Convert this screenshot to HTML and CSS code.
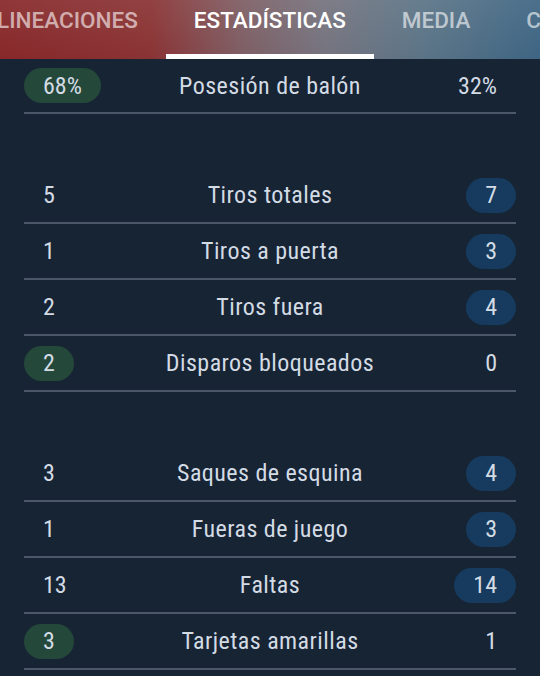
FILE: index.html
```html
<!DOCTYPE html>
<html lang="es">
<head>
<meta charset="utf-8">
<link rel="stylesheet" href="styles.css">
</head>
<body>
<nav class="tabs">
  <div class="tab-strip">
    <div class="tab">LINEACIONES</div>
    <div class="tab active">ESTADÍSTICAS</div>
    <div class="tab">MEDIA</div>
    <div class="tab">CLASIFICACIÓN</div>
  </div>
</nav>
<main class="stats">
  <section class="group">
    <div class="row first"><span class="val left"><span class="pill green">68%</span></span><span class="label">Posesión de balón</span><span class="val right">32%</span></div>
  </section>
  <section class="group">
    <div class="row"><span class="val left">5</span><span class="label">Tiros totales</span><span class="val right"><span class="pill blue">7</span></span></div>
    <div class="row"><span class="val left">1</span><span class="label">Tiros a puerta</span><span class="val right"><span class="pill blue">3</span></span></div>
    <div class="row"><span class="val left">2</span><span class="label">Tiros fuera</span><span class="val right"><span class="pill blue">4</span></span></div>
    <div class="row"><span class="val left"><span class="pill green">2</span></span><span class="label">Disparos bloqueados</span><span class="val right">0</span></div>
  </section>
  <section class="group">
    <div class="row"><span class="val left">3</span><span class="label">Saques de esquina</span><span class="val right"><span class="pill blue">4</span></span></div>
    <div class="row"><span class="val left">1</span><span class="label">Fueras de juego</span><span class="val right"><span class="pill blue">3</span></span></div>
    <div class="row"><span class="val left">13</span><span class="label">Faltas</span><span class="val right"><span class="pill blue">14</span></span></div>
    <div class="row"><span class="val left"><span class="pill green">3</span></span><span class="label">Tarjetas amarillas</span><span class="val right">1</span></div>
  </section>
</main>
</body>
</html>
```
FILE: styles.css
```css
html, body {
  margin: 0;
  padding: 0;
}
body {
  background: #172434;
  width: 540px;
  height: 676px;
  overflow: hidden;
  font-family: Roboto, "Liberation Sans", sans-serif;
  color: #d3dbe4;
}
.tabs {
  height: 59px;
  overflow: hidden;
  background:
    linear-gradient(180deg, rgba(255,255,255,0.07) 0%, rgba(255,255,255,0) 100%),
    linear-gradient(90deg, #87282a 0%, #8a3334 28%, #7d5e64 45%, #75737e 60%, #5b7486 78%, #3e6583 100%);
}
.tab-strip {
  display: flex;
  height: 59px;
  margin-left: -31px;
}
.tab {
  flex: none;
  box-sizing: border-box;
  height: 59px;
  padding: 7px 28px 0;
  font-size: 22.5px;
  font-weight: 500;
  color: rgba(255,255,255,0.6);
  white-space: nowrap;
}
.tab.active {
  color: #ffffff;
  border-bottom: 5px solid #ffffff;
}
.stats {
  padding: 0 24px;
}
.group + .group {
  margin-top: 54px;
}
.row {
  display: grid;
  grid-template-columns: 1fr auto 1fr;
  align-items: center;
  height: 54px;
  border-bottom: 2px solid #4c586a;
  font-size: 24px;
  font-stretch: 80%;
}
.row.first {
  height: 53px;
}
.label {
  text-align: center;
  white-space: nowrap;
  letter-spacing: 0.45px;
}
.val {
  display: flex;
}
.val.left {
  justify-content: flex-start;
  padding-left: 19px;
}
.val.right {
  justify-content: flex-end;
  padding-right: 19px;
}
.val .pill {
  margin-left: -19px;
}
.val.right .pill {
  margin-left: 0;
  margin-right: -19px;
}
.pill {
  display: inline-flex;
  align-items: center;
  height: 35px;
  padding: 0 19px;
  border-radius: 18px;
}
.pill.green {
  background: #24483a;
}
.pill.blue {
  background: #163b5e;
}
```
